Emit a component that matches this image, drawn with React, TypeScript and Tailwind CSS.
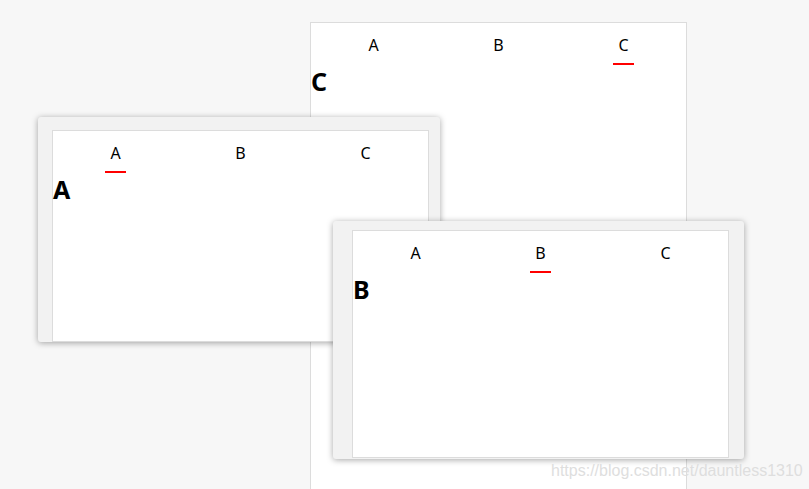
import React from "react";

const tabs = ["A", "B", "C"];

const TabPanel = ({ active }: { active: string }) => (
  <div className="w-[377px] h-full bg-white border border-[#dcdcdc]">
    <div className="flex">
      {tabs.map((t) => (
        <div key={t} className="flex-1 flex flex-col items-center pt-[10px]">
          <span className="text-[16px] leading-[24px] text-black">{t}</span>
          <span
            className={`mt-[6px] w-[21px] h-[2px] ${t === active ? "bg-[#ff0000]" : "bg-transparent"}`}
          />
        </div>
      ))}
    </div>
    <h2 className="mt-[4px] text-[25px] leading-[25px] font-bold text-black">{active}</h2>
  </div>
);

export default function App() {
  return (
    <div
      className="relative w-[809px] h-[489px] overflow-hidden bg-[#f7f7f7]"
      style={{ fontFamily: '"Noto Sans", "Open Sans", sans-serif' }}
    >
      {/* window C (behind) */}
      <div className="absolute left-[310px] top-[22px] h-[480px]">
        <TabPanel active="C" />
      </div>

      {/* window A */}
      <div className="absolute left-[38px] top-[117px] w-[402px] h-[225px] rounded-[3px] bg-[#f2f2f2] shadow-[0_1px_6px_rgba(0,0,0,0.35)] pl-[14px] pt-[13px]">
        <TabPanel active="A" />
      </div>

      {/* window B (front) */}
      <div className="absolute left-[333px] top-[221px] w-[411px] h-[238px] rounded-[3px] bg-[#f2f2f2] shadow-[0_1px_6px_rgba(0,0,0,0.35)] pl-[19px] pt-[9px] pb-[1px]">
        <TabPanel active="B" />
      </div>

      <div
        className="absolute left-[551px] top-[459px] text-[16px] text-[#dedede]"
        style={{ fontFamily: '"Liberation Sans", Arial, sans-serif' }}
      >
        https://blog.csdn.net/dauntless1310
      </div>
    </div>
  );
}
